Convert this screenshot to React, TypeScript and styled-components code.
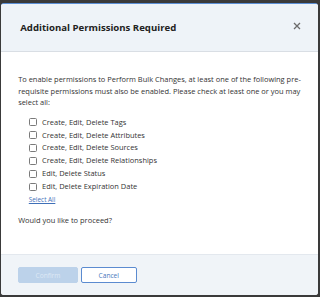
import * as React from "react";
import styled, { createGlobalStyle } from "styled-components";

// horizontal sizes follow the window width (the design is 300px wide)
const w = (n: number) => `${(n / 3).toFixed(3)}vw`;

const GlobalStyle = createGlobalStyle`
	html, body {
		margin: 0;
		padding: 0;
		background: #3a3a3a;
	}
	* {
		box-sizing: border-box;
	}
`;

const StyledBackdrop = styled.div`
	width: 100vw;
	height: 100vh;
	padding: 3px ${w(2)} 2px ${w(1)};
	background: #3a3a3a;
	font-family: "Open Sans", "Liberation Sans", sans-serif;
`;

const StyledModal = styled.div`
	display: flex;
	flex-direction: column;
	height: 100%;
	background: #ffffff;
	border-top: 1px solid #5b8fd6;
	border-radius: 3px;
	overflow: hidden;
`;

const StyledHeader = styled.div`
	display: flex;
	align-items: center;
	justify-content: space-between;
	flex: none;
	height: 48px;
	padding: 0 ${w(16)} 0 ${w(18)};
	background: #eef3f8;
	border-bottom: 1px solid #d9dee4;
`;

const StyledTitle = styled.h2`
	margin: 0;
	font-size: ${w(9)};
	font-weight: 700;
	color: #222;
`;

const StyledClose = styled.button`
	display: flex;
	margin-bottom: 4px;
	padding: 0;
	border: none;
	background: none;
	color: #6b6b6b;
	cursor: pointer;
`;

const StyledBody = styled.div`
	flex: 1;
	padding: 22px ${w(12)} 0 ${w(16)};
	font-size: ${w(7)};
	line-height: 11.5px;
	color: #333;
`;

const StyledText = styled.p`
	margin: 0;
`;

const StyledList = styled.ul`
	margin: 7.5px 0 0;
	padding: 0 0 0 ${w(10)};
	list-style: none;
`;

const StyledItem = styled.li`
	display: flex;
	align-items: center;
	gap: ${w(5)};
	height: 12.9px;
`;

const StyledCheckbox = styled.span`
	flex: none;
	width: 8px;
	height: 8px;
	border: 1px solid #7a7a7a;
	border-radius: 1.5px;
	background: #fff;
`;

const StyledLink = styled.a`
	display: block;
	margin: 1px 0 0 ${w(10)};
	font-size: ${w(6)};
	color: #3f70b8;
	text-decoration: underline;
`;

const StyledQuestion = styled.p`
	margin: 9.5px 0 0;
`;

const StyledFooter = styled.div`
	display: flex;
	flex: none;
	gap: ${w(3)};
	height: 41px;
	padding: 12px ${w(16)} 0;
	background: #f0f4f8;
	border-top: 1px solid #e3e8ee;
`;

const StyledButton = styled.button<{ $primary?: boolean }>`
	width: ${(p) => (p.$primary ? w(56) : w(52))};
	height: 16px;
	padding: 0;
	font-family: inherit;
	font-size: ${w(6.2)};
	border-radius: 2px;
	border: 1px solid ${(p) => (p.$primary ? "#bcd2ea" : "#5b8bd0")};
	background: ${(p) => (p.$primary ? "#bcd2ea" : "#ffffff")};
	color: ${(p) => (p.$primary ? "#dce8f5" : "#4a78bd")};
`;

const permissions = [
	"Create, Edit, Delete Tags",
	"Create, Edit, Delete Attributes",
	"Create, Edit, Delete Sources",
	"Create, Edit, Delete Relationships",
	"Edit, Delete Status",
	"Edit, Delete Expiration Date",
];

const App: React.FC = () => {
	return (
		<StyledBackdrop>
			<GlobalStyle />
			<StyledModal>
				<StyledHeader>
					<StyledTitle>Additional Permissions Required</StyledTitle>
					<StyledClose aria-label="Close">
						<svg width="8" height="8" viewBox="0 0 8 8">
							<path d="M1 1L7 7M7 1L1 7" stroke="currentColor" strokeWidth="1.3" />
						</svg>
					</StyledClose>
				</StyledHeader>
				<StyledBody>
					<StyledText>
						To enable permissions to Perform Bulk Changes, at least one of the following
						pre-requisite permissions must also be enabled. Please check at least one or you may
						select all:
					</StyledText>
					<StyledList>
						{permissions.map((label) => (
							<StyledItem key={label}>
								<StyledCheckbox />
								{label}
							</StyledItem>
						))}
					</StyledList>
					<StyledLink href="#">Select All</StyledLink>
					<StyledQuestion>Would you like to proceed?</StyledQuestion>
				</StyledBody>
				<StyledFooter>
					<StyledButton $primary disabled>
						Confirm
					</StyledButton>
					<StyledButton>Cancel</StyledButton>
				</StyledFooter>
			</StyledModal>
		</StyledBackdrop>
	);
};

export default App;
